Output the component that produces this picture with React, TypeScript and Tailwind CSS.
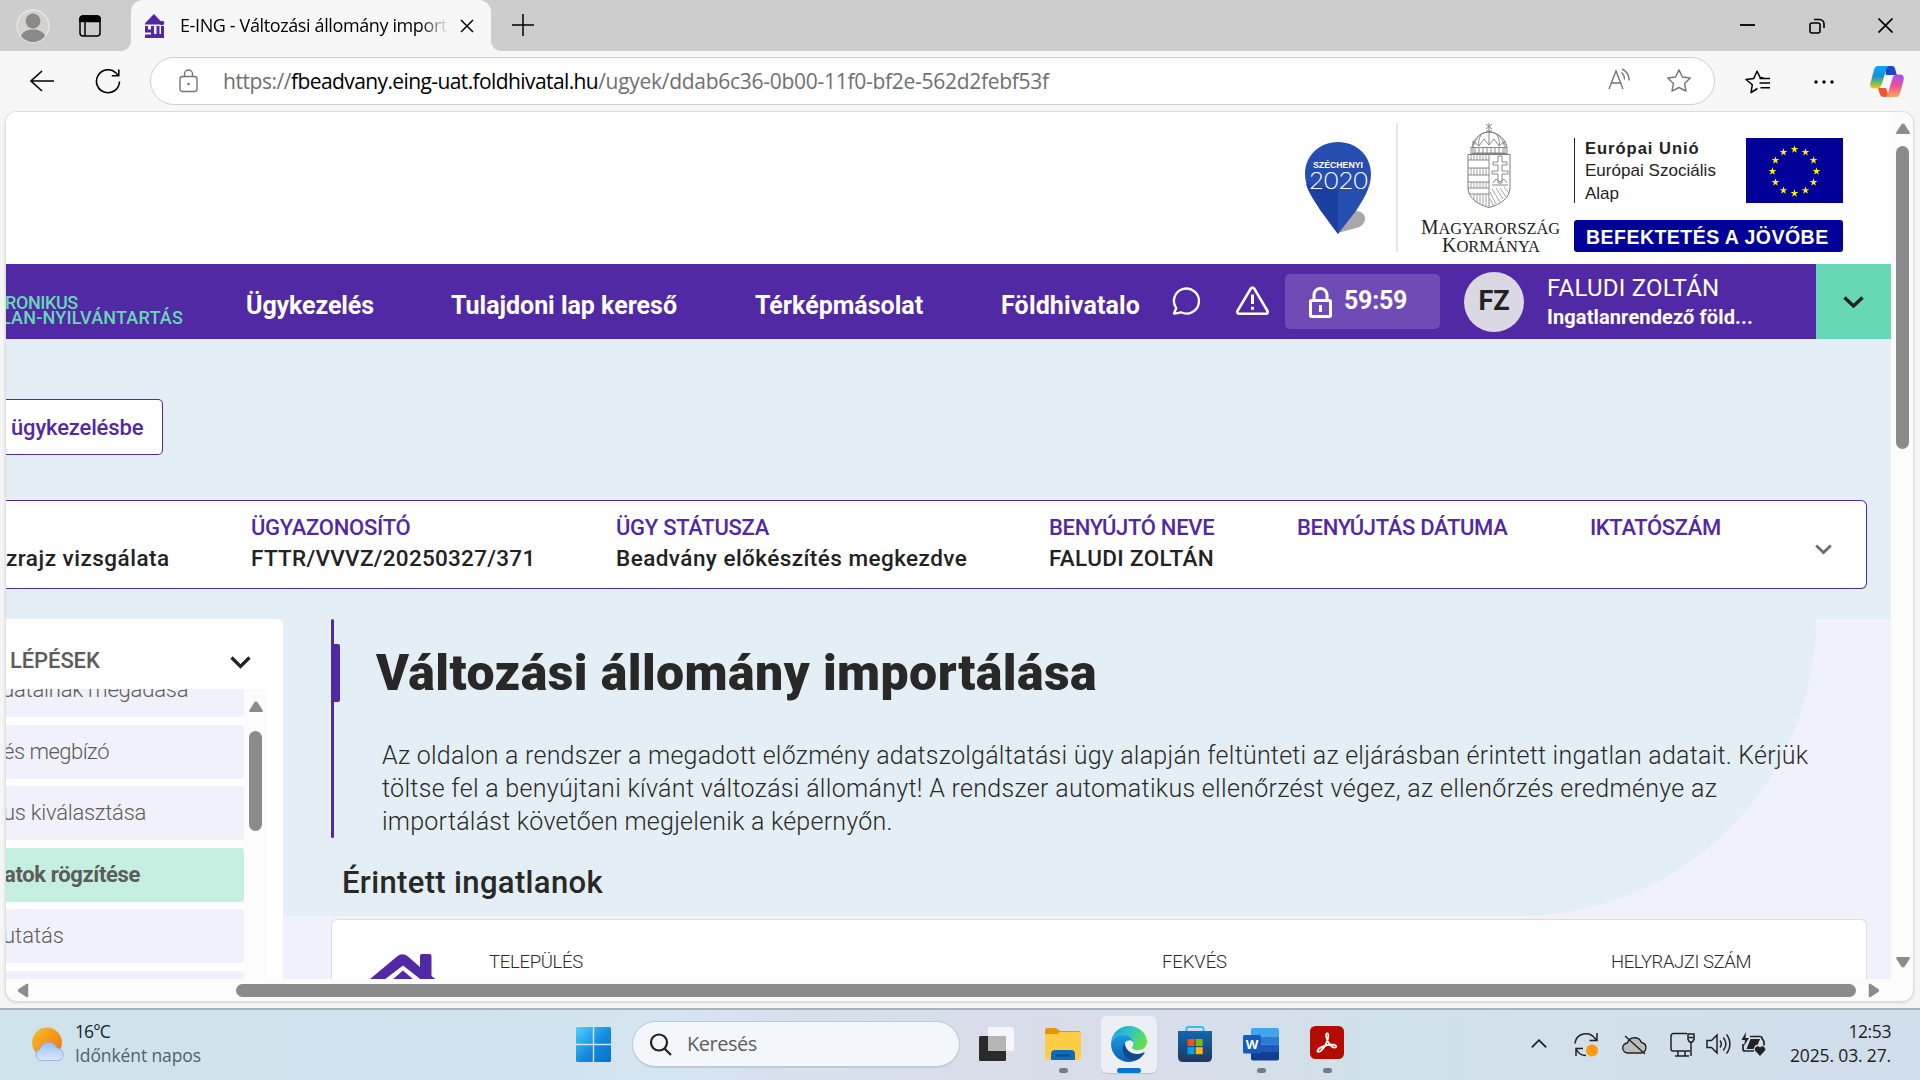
import type { ReactNode } from "react";

const STAR = "M12 2.6l2.9 6 6.6.9-4.8 4.6 1.2 6.5-5.9-3.1-5.9 3.1 1.2-6.5L2.5 9.5l6.6-.9z";

function AppHouse({ className }: { className: string }) {
  return (
    <svg viewBox="0 0 21 24" className={className} fill="#5229a5">
      <path d="M10 0L16.500 7v3.500H1V9.200z" />
      <circle cx="18" cy="9" r="2.300" />
      <path d="M1 12h3v3.500h3V12h3v8h2.500v-8h3v8H17v-8h3v12H1v-3.500h6V18.500H1z" />
    </svg>
  );
}

function TabStrip() {
  return (
    <div className="flex h-[51px] shrink-0 items-start bg-[#cdcdcd]">
      <div className="flex h-[51px] w-[119px] items-center">
        <svg viewBox="0 0 34 34" className="ml-4 h-[34px] w-[34px]">
          <circle cx="17" cy="17" r="16" fill="#d4d2ce" stroke="#e8e6e3" strokeWidth="1.4" />
          <circle cx="17" cy="12" r="7.4" fill="#8c8885" />
          <path d="M5 27c2-5 7-6.500 12-6.500s10 1.500 12 6.500c-3 4-7.500 6-12 6s-9-2-12-6z" fill="#8c8885" />
        </svg>
        <svg viewBox="0 0 22 22" className="ml-[29px] h-[22px] w-[22px]" fill="none" stroke="#000" strokeWidth="1.5">
          <rect x="1" y="1" width="20" height="20" rx="3" />
          <path d="M1 4a3 3 0 0 1 3-3h14a3 3 0 0 1 3 3v2.500H1z" fill="#000" />
          <path d="M6 6v15" />
        </svg>
      </div>
      <div className="flex h-[51px] w-[12px] items-end bg-[#f7f7f7]">
        <div className="h-[51px] w-[12px] rounded-br-[10px] bg-[#cdcdcd]" />
      </div>
      <div className="h-[51px] w-[360px] bg-[#cdcdcd]">
        <div className="flex h-[51px] items-center rounded-t-[12px] bg-[#f7f7f7] pl-[13px]">
          <AppHouse className="h-6 w-[21px]" />
          <span className="ml-[15px] w-[267px] overflow-hidden whitespace-nowrap bg-gradient-to-r from-black from-90% to-black/5 bg-clip-text pb-px font-['Open_Sans'] text-[18px] leading-[26px] tracking-[-0.38px] text-transparent">
            E-ING - Változási állomány import
          </span>
          <svg viewBox="0 0 14 14" className="ml-[13px] h-[14px] w-[14px]" stroke="#000" strokeWidth="1.500">
            <path d="M1 1l12 12M13 1L1 13" />
          </svg>
        </div>
      </div>
      <div className="h-[51px] w-[10px] bg-[#f7f7f7]">
        <div className="h-[51px] w-[10px] rounded-bl-[10px] bg-[#cdcdcd]" />
      </div>
      <svg viewBox="0 0 22 22" className="ml-[11px] mt-[14px] h-[22px] w-[22px]" stroke="#000" strokeWidth="1.500">
        <path d="M11 0v22M0 11h22" />
      </svg>
      <div className="ml-auto flex h-[51px] items-center pr-[27px]">
        <svg viewBox="0 0 15 15" className="h-[15px] w-[15px]" stroke="#000" strokeWidth="1.800">
          <path d="M0 7h15" />
        </svg>
        <svg viewBox="0 0 16 16" className="ml-[54px] h-[16px] w-[16px]" fill="none" stroke="#000" strokeWidth="1.600">
          <rect x="1" y="5" width="10" height="10" rx="2" />
          <path d="M5 1.500h5.500a4.500 4.500 0 0 1 4.500 4.500V10" />
        </svg>
        <svg viewBox="0 0 15 15" className="ml-[53px] h-[15px] w-[15px]" stroke="#000" strokeWidth="1.700">
          <path d="M.5.5l14 14M14.500.5l-14 14" />
        </svg>
      </div>
    </div>
  );
}

function Toolbar() {
  return (
    <div className="flex h-[60px] shrink-0 items-start bg-[#f7f7f7] pt-[6px]">
      <svg viewBox="0 0 24 22" className="ml-[30px] mt-[13px] h-[22px] w-6" fill="none" stroke="#000" strokeWidth="1.600">
        <path d="M24 11H1M12 1L1 11l11 10" />
      </svg>
      <svg viewBox="0 0 26 26" className="ml-[41px] mt-[11px] h-[26px] w-[26px]" fill="none" stroke="#000" strokeWidth="1.600">
        <path d="M24.500 13.500A11.500 11.500 0 1 1 21 5l2.500 2.500M23.800 1.500v6.300h-7" />
      </svg>
      <div className="ml-[29px] flex h-12 w-[1565px] items-center rounded-full border border-[#d0d0d0] bg-white">
        <svg viewBox="0 0 19 24" className="ml-[28px] h-6 w-[19px]" fill="none" stroke="#757575" strokeWidth="1.400">
          <rect x="1" y="7.500" width="17" height="15" rx="2.500" />
          <path d="M5.500 7.500V5a4 4 0 0 1 8 0v2.500" />
          <circle cx="9.500" cy="15" r="1.300" fill="#757575" stroke="none" />
        </svg>
        <div className="ml-[25px] flex whitespace-nowrap font-['Open_Sans'] text-[21px] leading-[30px] text-[#707070]">
          <span className="tracking-[-0.45px]">https://</span>
          <span className="tracking-[-0.6px] text-black">fbeadvany.eing-uat.foldhivatal.hu</span>
          <span className="tracking-[-0.280px]">/ugyek/ddab6c36-0b00-11f0-bf2e-562d2febf53f</span>
        </div>
        <svg viewBox="0 0 24 22" className="ml-auto mb-1 h-[22px] w-6" fill="none" stroke="#757575" strokeWidth="1.400">
          <path d="M1 21L8 3l7 18M3.500 15h9M13 4.500c2.500 1.500 3.500 4 3.500 7M14 1c4.500 2 7 6 7.300 11.500" />
        </svg>
        <svg viewBox="1 1 22 22" className="ml-[34px] mr-[22px] h-[26px] w-[26px]" fill="none" stroke="#757575" strokeWidth="1.200" strokeLinejoin="round">
          <path d={STAR} />
        </svg>
      </div>
      <svg viewBox="0 0 26 24" className="ml-[30px] mt-[13px] h-6 w-[26px]" fill="none" stroke="#000" strokeWidth="1.500" strokeLinejoin="round">
        <path d="M12.500 18.500L6 22.500l1.300-7.700L1 9.500l7.800-1L12 1.200l3.200 6.500h3M14.500 8.500H25M14.500 13H25M15.500 17.800H25" />
      </svg>
      <svg viewBox="0 0 20 4" className="ml-[43px] mt-[23px] h-1 w-5">
        <circle cx="2" cy="2" r="1.700" />
        <circle cx="10" cy="2" r="1.700" />
        <circle cx="18" cy="2" r="1.700" />
      </svg>
      <svg viewBox="0 0 34 31" className="ml-[36px] mt-[9px] h-[31px] w-[34px]">
        <defs>
          <linearGradient id="cpA" x1="0" y1="0" x2="0" y2="1">
            <stop offset="0" stopColor="#12a5ee" />
            <stop offset=".45" stopColor="#1a8fd8" />
            <stop offset=".75" stopColor="#6fbf5a" />
            <stop offset="1" stopColor="#ffc800" />
          </linearGradient>
          <linearGradient id="cpB" x1="0" y1="0" x2="0" y2="1">
            <stop offset="0" stopColor="#a94df0" />
            <stop offset=".5" stopColor="#ee5190" />
            <stop offset="1" stopColor="#ffa35c" />
          </linearGradient>
        </defs>
        <path d="M15 0h7c2 0 2.600 1.200 3.200 3l1.600 6h-6l-5 0z" fill="#1b45cf" />
        <path d="M19 31h-5c-2.500 0-3.500-1-4.200-3L8 22h8z" fill="#f0562f" />
        <path d="M8 0h12c-2.500 0-3.500 2-4.300 5l-3.900 13c-1 3-2 4.500-5 4.500H4C.7 22.500-.4 20 .4 17L4 4c.7-2.600 1.700-4 4-4z" fill="url(#cpA)" />
        <path d="M26 31H14c2.500 0 3.500-2 4.300-5l3.900-13c1-3 2-4.500 5-4.500H30c3.300 0 4.400 2.500 3.600 5.500L30 27c-.7 2.600-1.700 4-4 4z" fill="url(#cpB)" />
      </svg>
    </div>
  );
}

function SzechenyiPin() {
  return (
    <svg viewBox="0 0 66 92" className="mt-[30px] h-[92px] w-[66px]">
      <path d="M33 91l18-22c6 0 9 4 9 8s-4 8-9 9z" fill="#a8a8a8" />
      <path d="M33 0c19 0 33 14 33 32 0 14-8 26-15 37L33 92 16 69C8 56 0 46 0 32 0 14 14 0 33 0z" fill="#264db0" />
      <path d="M33 48v44L16 69C11 61 4 52 1 42z" fill="#1c3fa2" />
      <text x="8" y="26" textLength="50" lengthAdjust="spacingAndGlyphs" fontFamily="Liberation Sans" fontWeight="700" fontSize="8.500" fill="#fff">SZÉCHENYI</text>
      <text x="4" y="46.500" textLength="59" lengthAdjust="spacingAndGlyphs" fontFamily="Lato" fontWeight="300" fontSize="23" fill="#fff">2020</text>
    </svg>
  );
}

function GovernmentLogo() {
  return (
    <svg viewBox="0 0 140 132" className="mt-[10px] h-[132px] w-[140px]" fill="none" stroke="#7d7d7d" strokeWidth=".9">
      <path d="M65 2l6 5M71 2l-6 5M68 1v10M65 9h6" />
      <path d="M53 23c2-8 8-13 15-13s13 5 15 13M52 31V19l6 5 5-7 5 6 5-6 5 7 6-5v12zM68 11v12M60 13c-2 3-3 7-2 11M76 13c2 3 3 7 2 11" />
      <path d="M51 25c2-9 9-15 17-15s16 6 18 15" />
      <rect x="50" y="25.500" width="36" height="6" />
      <path d="M54 26v5M58 26v5M62 26v5M66 26v5M70 26v5M74 26v5M78 26v5M82 26v5" />
      <path d="M47 32.500h42v33c0 10-9 17-21 20-12-3-21-10-21-20z" strokeWidth="1" />
      <path d="M68 32v53M47 38h21M47 46h21M47 53h21M47 60h21M47 66h21M48 72h20" />
      <path d="M50 33v5M53 33v5M56 33v5M59 33v5M62 33v5M65 33v5M50 46v7M53 46v7M56 46v7M59 46v7M62 46v7M65 46v7M50 60v6M53 60v6M56 60v6M59 60v6M62 60v6M65 60v6M53 72v6M56 72v8M59 72v10M62 72v12M65 72v12" strokeWidth=".7" />
      <path d="M77 34h4v6h5v3h-5v6h6v3h-6v9h-4v-9h-6v-3h6v-6h-5v-3h5zM71 63h16M72 61l3-4 4 3 4-3 3 4" />
      <path d="M69 70l6 12M69 77l4 7M71 67l8 13M75 66l7 11M79 66l6 9M83 65l5 6" strokeWidth=".7" />
      <g fill="#222" stroke="none" fontFamily="Liberation Serif">
        <text x="0" y="111.500" textLength="139" lengthAdjust="spacingAndGlyphs" fontSize="20.500">
          M<tspan fontSize="17">AGYARORSZÁG</tspan>
        </text>
        <text x="21" y="129.700" textLength="98" lengthAdjust="spacingAndGlyphs" fontSize="20.500">
          K<tspan fontSize="17">ORMÁNYA</tspan>
        </text>
      </g>
    </svg>
  );
}

const euStars = Array.from({ length: 12 }, (_, i) => {
  const a = (i * Math.PI) / 6;
  return { x: 48.5 + 22 * Math.sin(a), y: 33 - 22 * Math.cos(a) };
});

function LogoBand() {
  return (
    <div className="flex h-[152px] shrink-0 bg-white pl-[1299px]">
      <SzechenyiPin />
      <div className="ml-[25px] mt-[11px] h-[129px] w-[2px] bg-[#e6e6e6]" />
      <div className="ml-[23px]">
        <GovernmentLogo />
      </div>
      <div className="ml-[13px] mt-[26px] w-[269px]">
        <div className="flex justify-between">
          <div className="h-[65px] border-l-[1.500px] border-[#222] pl-[10px] font-['Liberation_Sans'] text-[16.500px] leading-[22.750px] text-[#222]">
            <div className="-mt-px font-bold tracking-[1px]">Európai Unió</div>
            <div className="text-[17px] tracking-[0.030px]">Európai Szociális</div>
            <div className="text-[17px]">Alap</div>
          </div>
          <svg viewBox="0 0 97 65" className="h-[65px] w-[97px]">
            <rect width="97" height="65" fill="#000099" />
            {euStars.map((s, i) => (
              <g key={i} transform={`translate(${s.x} ${s.y}) scale(.34) translate(-12 -12)`}>
                <path d="M12 1l2.700 8.300h8.700l-7 5.100 2.600 8.300-7-5.100-7 5.100 2.600-8.300-7-5.100h8.700z" fill="#ffee00" />
              </g>
            ))}
          </svg>
        </div>
        <div className="mt-[17px] flex h-8 items-center rounded-[3px] bg-[#000099] pl-[12px] pt-[2px] font-['Liberation_Sans'] text-[19.500px] font-bold leading-8 tracking-[0.470px] whitespace-nowrap text-white">
          BEFEKTETÉS A JÖVŐBE
        </div>
      </div>
    </div>
  );
}

function PrimaryNav() {
  return (
    <div className="flex h-[75px] shrink-0 bg-[#5229a5] font-['Roboto'] text-white">
      <div className="mt-[31px] h-[34px] w-[240px] overflow-hidden whitespace-nowrap text-[18px] font-medium leading-[14.500px] text-[#67d7b5]">
        <div className="-ml-px pt-px tracking-[-0.400px]">RONIKUS</div>
        <div className="-ml-[5px] tracking-[0.200px]">LAN-NYILVÁNTARTÁS</div>
      </div>
      <div className="mt-[27px] flex h-[30px] text-[25px] font-bold leading-[30px] whitespace-nowrap">
        <span className="w-[205px] tracking-[-0.100px]">Ügykezelés</span>
        <span className="w-[304px] tracking-[-0.020px]">Tulajdoni lap kereső</span>
        <span className="w-[246px]">Térképmásolat</span>
        <span className="w-[171px] tracking-[0.150px]">Földhivatalo</span>
      </div>
      <svg viewBox="0 0 29 29" className="mt-[22px] h-[29px] w-[29px]" fill="none" stroke="#fff" strokeWidth="2.300" strokeLinejoin="round">
        <path d="M2 27.500l2.200-5.300A12.500 12.500 0 1 1 9 26.300c-2.300.9-4.600 1.300-7 1.200z" />
      </svg>
      <svg viewBox="0 0 33 29" className="ml-[35px] mt-[22px] h-[29px] w-[33px]" fill="none" stroke="#fff" strokeWidth="2.500" strokeLinejoin="round">
        <path d="M14.800 2.500a2 2 0 0 1 3.400 0L31.500 25a1.800 1.800 0 0 1-1.500 2.700H3A1.800 1.800 0 0 1 1.500 25z" />
        <path d="M16.500 8.500v9.500M16.500 20.800v3" strokeWidth="3" />
      </svg>
      <div className="ml-[16px] mt-[10px] flex h-[55px] w-[155px] rounded-[5px] bg-[#704bb5]">
        <svg viewBox="0 0 23 31" className="ml-6 mt-[13px] h-[31px] w-[23px]" fill="none" stroke="#fff" strokeWidth="3">
          <rect x="1.500" y="13.500" width="20" height="16" rx="1" />
          <path d="M5 13V8a6.500 6.500 0 0 1 13 0v5" />
          <path d="M11.500 18v7" />
        </svg>
        <span className="ml-[12px] mt-[12px] text-[25px] font-bold leading-[30px] tracking-[-0.280px]">59:59</span>
      </div>
      <div className="ml-6 mt-2 flex h-[60px] w-[60px] items-center justify-center rounded-full bg-[#dad8e3] pb-[2px] text-[27px] font-bold text-[#222]">
        FZ
      </div>
      <div className="ml-[23px] mt-[9px] w-[269px] whitespace-nowrap">
        <div className="text-[24px] leading-[30px] tracking-[0.230px]">FALUDI ZOLTÁN</div>
        <div className="text-[20px] font-bold leading-[29px] tracking-[0.120px]">Ingatlanrendező föld...</div>
      </div>
      <div className="flex h-[75px] flex-1 items-center justify-center bg-[#67d7b5]">
        <svg viewBox="0 0 21 12" className="h-3 w-[21px]" fill="none" stroke="#222" strokeWidth="3.400">
          <path d="M1.500 1.500l9 8.500 9-8.500" />
        </svg>
      </div>
    </div>
  );
}

const caseFields = [
  { w: "w-[365px]", label: "ÜGYAZONOSÍTÓ", lt: "tracking-[-0.270px]", value: "FTTR/VVVZ/20250327/371", vt: "tracking-[0.270px]" },
  { w: "w-[433px]", label: "ÜGY STÁTUSZA", lt: "tracking-[-0.280px]", value: "Beadvány előkészítés megkezdve", vt: "tracking-[0.450px]" },
  { w: "w-[248px]", label: "BENYÚJTÓ NEVE", lt: "tracking-[-0.280px]", value: "FALUDI ZOLTÁN", vt: "tracking-[0.380px]" },
  { w: "w-[293px]", label: "BENYÚJTÁS DÁTUMA", lt: "tracking-[-0.320px]", value: "", vt: "" },
  { w: "w-[225px]", label: "IKTATÓSZÁM", lt: "tracking-[-0.380px]", value: "", vt: "" },
];

function CasePanel() {
  return (
    <div className="mt-[45px] flex h-[89px] w-[1861px] shrink-0 overflow-hidden rounded-r-[6px] border border-l-0 border-[#5229a5] bg-white pt-[13px] font-['Roboto'] whitespace-nowrap">
      <div className="w-[245px] pt-[30px] text-[22.500px] font-medium leading-[28px] tracking-[0.500px] text-[#222]">zrajz vizsgálata</div>
      {caseFields.map((f) => (
        <div key={f.label} className={f.w}>
          <div className={"text-[22px] font-medium leading-[28px] text-[#5229a5] " + f.lt}>{f.label}</div>
          <div className={"mt-[2px] text-[22.500px] font-medium leading-[28px] text-[#222] " + f.vt}>{f.value}</div>
        </div>
      ))}
      <svg viewBox="0 0 17 11" className="mt-[30px] h-[11px] w-[17px]" fill="none" stroke="#6e6e6e" strokeWidth="2.800">
        <path d="M1.200 1.500l7.300 7 7.300-7" />
      </svg>
    </div>
  );
}

const steps = [
  { text: "datainak megadása", cls: "bg-[#f1f1fb] font-light tracking-[-0.200px] -indent-[4px]" },
  { text: "és megbízó", cls: "bg-[#f1f1fb] font-light tracking-[-0.500px] -indent-[3px]" },
  { text: "us kiválasztása", cls: "bg-[#f1f1fb] font-light tracking-[-0.260px] -indent-[3px]" },
  { text: "atok rögzítése", cls: "bg-[#c5efe1] font-bold tracking-[-0.350px] -indent-[2px]" },
  { text: "utatás", cls: "bg-[#f1f1fb] font-light -indent-[3px]" },
  { text: "", cls: "bg-[#f1f1fb]" },
];

function StepSidebar() {
  return (
    <div className="h-[360px] w-[276.500px] shrink-0 overflow-hidden rounded-tr-[6px] bg-white font-['Roboto'] text-[22px]">
      <div className="flex h-[70px] items-center justify-between pl-[4px] pr-[32px] pt-[14px]">
        <span className="font-medium leading-7 tracking-[-0.100px] text-[#5c5c5c]">LÉPÉSEK</span>
        <svg viewBox="0 0 21 13" className="mt-[3px] h-[13px] w-[21px]" fill="none" stroke="#222" strokeWidth="3.200">
          <path d="M1.500 1.500l9 9 9-9" />
        </svg>
      </div>
      <div className="flex h-[290px] overflow-hidden">
        <div className="-mt-[26px] flex w-[238px] flex-col gap-[7.500px]">
          {steps.map((s, i) => (
            <div key={i} className={"h-[54px] shrink-0 overflow-hidden rounded-r-[3px] pb-px leading-[53px] whitespace-nowrap text-[#5c5c5c] " + s.cls}>
              {s.text}
            </div>
          ))}
        </div>
        <div className="flex w-[23px] flex-col items-center bg-[#fcfcfc] pt-[12px]">
          <Arrow className="" />
          <div className="mt-[19px] h-[100px] w-[13px] rounded-full bg-[#8b8b8b]" />
        </div>
      </div>
    </div>
  );
}

function ImportContent() {
  return (
    <div className="relative h-[360px] flex-1 bg-[#f1f1fb] font-['Roboto']">
      <div className="absolute left-0 top-0 h-[297px] w-[1533px] rounded-br-[297px] bg-[#e3eff4]" />
      <div className="relative flex flex-col pl-[48.500px]">
        <div className="flex h-[219px] whitespace-nowrap">
          <div className="w-[3px] rounded-full bg-[#5229a5]" />
          <div className="mt-[25px] h-[58px] w-[6px] rounded-r-[2px] bg-[#5229a5]" />
          <div className="ml-[36px] mt-[24px]">
            <h1 className="text-[50px] font-black leading-[60px] tracking-[0.420px] text-[#282828]">Változási állomány importálása</h1>
            <p className="ml-[6px] mt-[36px] text-[25px] font-light leading-[33px] text-[#2a2a2a]">
              <span className="block tracking-[0.240px]">
                Az oldalon a rendszer a megadott előzmény adatszolgáltatási ügy alapján feltünteti az eljárásban érintett ingatlan adatait. Kérjük
              </span>
              <span className="block tracking-[0.310px]">
                töltse fel a benyújtani kívánt változási állományt! A rendszer automatikus ellenőrzést végez, az ellenőrzés eredménye az
              </span>
              <span className="block tracking-[0.240px]">importálást követően megjelenik a képernyőn.</span>
            </p>
          </div>
        </div>
        <h2 className="ml-[11px] mt-[25px] text-[31px] font-medium leading-10 tracking-[0.350px] text-[#282828]">Érintett ingatlanok</h2>
        <div className="mt-[16px] flex h-[60px] w-[1536px] overflow-hidden rounded-t-[6px] border border-b-0 border-[#dcdce4] bg-white text-[18.500px] font-light leading-6 text-[#2a2a2a]">
          <svg viewBox="0 0 66 26" className="ml-[38px] mt-[34px] h-[26px] w-[66px] shrink-0" fill="#5229a5">
            <path d="M0 25L27 2.500q5.500-4.500 11 0L50 13V2q0-2 2-2h7.500q2 0 2 2v20l4 3v1H51.500L33 11.500 14 26H0z" />
            <path d="M22 26l11-9.500L44 26z" />
          </svg>
          <span className="ml-[53px] mt-[30px] w-[673px] tracking-[-0.300px]">TELEPÜLÉS</span>
          <span className="mt-[30px] w-[449px] tracking-[-0.090px]">FEKVÉS</span>
          <span className="mt-[30px] tracking-[-0.430px]">HELYRAJZI SZÁM</span>
        </div>
      </div>
    </div>
  );
}

function Arrow({ className }: { className: string }) {
  return (
    <svg viewBox="0 0 14 11" className={"h-[11px] w-[14px] " + className} fill="#8b8b8b">
      <path d="M5.500 1.200a1.800 1.800 0 0 1 3 0l5.200 8c.5 1-.1 1.800-1 1.800H1.300C.4 11-.2 10.200.3 9.200z" />
    </svg>
  );
}

function Viewport() {
  return (
    <div className="ml-[5px] flex h-[891px] w-[1909px] shrink-0 flex-col overflow-hidden rounded-[12px] border border-[#dedede] bg-[#fcfcfc] shadow-sm">
      <div className="flex h-[867px]">
        <div className="flex h-[867px] w-[1885px] flex-col overflow-hidden bg-[#e3eff4]">
          <LogoBand />
          <PrimaryNav />
          <div className="mt-[60px] flex h-14 w-[157px] shrink-0 items-center rounded-r-[5px] border border-l-0 border-[#5229a5] bg-white pl-[5px] font-['Roboto'] text-[22px] font-medium tracking-[-0.150px] whitespace-nowrap text-[#5229a5]">
            ügykezelésbe
          </div>
          <CasePanel />
          <div className="mt-[30px] flex">
            <StepSidebar />
            <ImportContent />
          </div>
        </div>
        <div className="flex w-[22px] flex-col items-center pl-px pt-[11px]">
          <Arrow className="" />
          <div className="mt-[12px] h-[303px] w-[13px] rounded-full bg-[#8b8b8b]" />
          <Arrow className="mb-[11px] mt-auto rotate-180" />
        </div>
      </div>
      <div className="flex h-[22px] w-[1885px] items-center">
        <Arrow className="ml-[10px] -rotate-90" />
        <div className="ml-[206px] h-[13px] w-[1620px] rounded-full bg-[#8b8b8b]" />
        <Arrow className="ml-[11px] rotate-90" />
      </div>
    </div>
  );
}

function TaskItem({ children, running, active }: { children: ReactNode; running?: boolean; active?: boolean }) {
  return (
    <div className={"flex h-[57px] w-[56px] shrink-0 flex-col items-center rounded-[6px] pt-[10px] " + (active ? "bg-[#ecf0f5] shadow-[0_1px_1px_#b9c0ca]" : "")}>
      <div className="h-[36px] w-[36px]">{children}</div>
      {active && <div className="mt-[6px] h-[5px] w-6 rounded-full bg-[#0078d4]" />}
      {running && !active && <div className="mt-[6px] h-[5px] w-[9px] rounded-full bg-[#747b84]" />}
    </div>
  );
}

function Taskbar() {
  return (
    <div className="flex h-[70px] shrink-0 items-start bg-[linear-gradient(90deg,#cfe3ed_0%,#d0e3ee_26%,#d5e4f1_35%,#d9dce9_52%,#d6dee9_64%,#cfe1ea_72%,#d2e0ec_80%,#cfdeea_100%)] font-['Open_Sans']">
      <svg viewBox="0 0 34 34" className="ml-[32px] mt-[17px] h-[34px] w-[34px]">
        <defs>
          <linearGradient id="sun" x1="0" y1="0" x2="1" y2="1">
            <stop offset="0" stopColor="#f2c230" />
            <stop offset="1" stopColor="#f66c0a" />
          </linearGradient>
          <linearGradient id="cloud" x1="0" y1="0" x2="0" y2="1">
            <stop offset="0" stopColor="#9dbdf2" />
            <stop offset="1" stopColor="#dce8fc" />
          </linearGradient>
        </defs>
        <circle cx="15" cy="15.500" r="15" fill="url(#sun)" />
        <path d="M9 33.500a6 6 0 0 1-1-11.500 9 9 0 0 1 17-1 6.500 6.500 0 0 1 2 12.500z" fill="url(#cloud)" stroke="#86a9e6" strokeWidth=".8" />
      </svg>
      <div className="ml-[9px] mt-[10px] w-[501px] text-[17.500px] leading-[23.500px] whitespace-nowrap">
        <div className="tracking-[-0.900px] text-[#1c1f22]">16°C</div>
        <div className="tracking-[-0.100px] text-[#55606a]">Időnként napos</div>
      </div>
      <svg viewBox="0 0 35 35" className="mt-[17px] h-[35px] w-[35px]">
        <defs>
          <linearGradient id="win" x1="0" y1="0" x2="1" y2="1">
            <stop offset="0" stopColor="#4fd2ff" />
            <stop offset=".55" stopColor="#1389dd" />
            <stop offset="1" stopColor="#0074cf" />
          </linearGradient>
        </defs>
        <path d="M1 0h15.800v16.800H0V1zM18.200 0H34l1 1v15.800H18.200zM0 18.200h16.800V35H1l-1-1zM18.200 18.200H35V34l-1 1H18.200z" fill="url(#win)" />
      </svg>
      <div className="ml-[21px] mt-[11px] flex h-[47px] w-[328px] items-center rounded-full border border-b-2 border-[#bccbd9] bg-[#f3f7fb]">
        <svg viewBox="0 0 23 23" className="ml-[16px] h-[23px] w-[23px]" fill="none" stroke="#222" strokeWidth="2.200">
          <circle cx="10" cy="9.500" r="8" />
          <path d="M15.500 15.500L22 22" />
        </svg>
        <span className="ml-[15px] text-[20px] leading-7 tracking-[-0.500px] text-[#5b5f63]">Keresés</span>
      </div>
      <div className="ml-[9px] mt-[6px] flex gap-[10px]">
        <TaskItem>
          <svg viewBox="0 0 36 36" className="h-9 w-9">
            <rect x="0" y="10" width="27" height="25" rx="1.500" fill="#2a2a2a" />
            <rect x="9" y="1" width="26" height="24" rx="1.500" fill="#f6f6f8" />
            <path d="M9 10h18v15H9z" fill="#b5b5b5" />
          </svg>
        </TaskItem>
        <TaskItem running>
          <svg viewBox="0 0 36 36" className="h-9 w-9">
            <path d="M0 4q0-2 2-2h9l4 3h19q2 0 2 2v4H0z" fill="#dc9a08" />
            <path d="M0 8h12l3-2h19q2 0 2 2v24q0 2-2 2H2q-2 0-2-2z" fill="#ffcc45" />
            <path d="M6 34v-6q0-4 4-4h16q4 0 4 4v6z" fill="#0f6cbd" />
            <path d="M11 29.500h14" stroke="#0b4b85" strokeWidth="2" />
          </svg>
        </TaskItem>
        <TaskItem active>
          <svg viewBox="0 0 36 36" className="h-9 w-9">
            <defs>
              <linearGradient id="edA" x1="0" y1="0" x2="1" y2=".5">
                <stop offset="0" stopColor="#1f9ede" />
                <stop offset=".5" stopColor="#2fc2c8" />
                <stop offset="1" stopColor="#62e04e" />
              </linearGradient>
              <linearGradient id="edB" x1="0" y1="0" x2="0" y2="1">
                <stop offset="0" stopColor="#1b9de2" />
                <stop offset="1" stopColor="#0b5cb0" />
              </linearGradient>
            </defs>
            <path d="M18 0c10 0 18 7.500 18 15.500 0 5.500-4.200 8.700-9 8.700-4 0-6.200-1.500-6.200-2.500 0-.8 1.600-1.400 1.600-4.300C22.400 12.500 17 9.500 12 9.500c-5 0-9.500 2.500-12 7C.7 7 8.500 0 18 0z" fill="url(#edA)" />
            <path d="M0 17c2-5 7-8 12-8 5.500 0 10.400 3.200 10.400 8.400 0-2.600-3.600-4.400-6.600-2.400-3.300 2.200-4.500 7-2.800 11.500C15 32 20.500 34.500 25 34.300 22.800 35.500 20.500 36 18 36 8 36 0 28 0 18z" fill="url(#edB)" />
            <path d="M14 16.500c-3.500 4.500-3 11.500 1.500 15.300 4 3.300 9 3.200 11 2 3-1.600 5.500-4 7-6.500.5-.9-.2-1.300-1-.8-4.500 2.300-10.500 2-14.500-1.300-3-2.500-4.300-5.600-4-8.700z" fill="#114a8b" />
          </svg>
        </TaskItem>
        <TaskItem>
          <svg viewBox="0 0 36 36" className="h-9 w-9">
            <defs>
              <linearGradient id="store" x1="0" y1="0" x2="0" y2="1">
                <stop offset="0" stopColor="#0f69ae" />
                <stop offset="1" stopColor="#22365f" />
              </linearGradient>
            </defs>
            <path d="M9.500 7V3q0-2 2-2h13q2 0 2 2v4" fill="none" stroke="#2fc1f5" strokeWidth="2" />
            <path d="M1 5h34v26q0 5-5 5H6q-5 0-5-5z" fill="url(#store)" />
            <path d="M10.500 13h7v7h-7z" fill="#f25022" />
            <path d="M18.700 13h7v7h-7z" fill="#7fba00" />
            <path d="M10.500 21.200h7v7h-7z" fill="#00a4ef" />
            <path d="M18.700 21.200h7v7h-7z" fill="#ffb900" />
          </svg>
        </TaskItem>
        <TaskItem running>
          <svg viewBox="0 0 36 36" className="h-9 w-9">
            <path d="M8 4q0-2 2-2h24q2 0 2 2v6.500H8z" fill="#41a5ee" />
            <path d="M8 10.500h28v8H8z" fill="#2b7cd3" />
            <path d="M8 18.500h28v7.500H8z" fill="#185abd" />
            <path d="M8 26h28v6.500q0 2-2 2H10q-2 0-2-2z" fill="#103f91" />
            <rect x="0" y="9" width="18" height="18.500" rx="1.500" fill="#185abd" />
            <text x="9" y="23" textAnchor="middle" fontFamily="Open Sans" fontWeight="700" fontSize="13" fill="#fff">W</text>
          </svg>
        </TaskItem>
        <TaskItem running>
          <svg viewBox="0 0 36 36" className="h-9 w-9">
            <rect x="1" y="0" width="34" height="33" rx="5.500" fill="#b30b00" />
            <path d="M8.500 24.500c1-3 8-5.500 14-5.800 5-.2 5.800 2.200 3.800 2.800-3.300 1-8.500-5.500-9.200-11.500-.4-3.500 2.400-3.600 2.300-.3-.1 4.500-4 12-7.200 15-2 1.800-4.200 1.500-3.700-.2z" fill="none" stroke="#fff" strokeWidth="1.700" />
          </svg>
        </TaskItem>
      </div>
      <div className="ml-auto flex items-start pr-[29px]">
        <svg viewBox="0 0 16 9" className="mt-[29px] h-[9px] w-4" fill="none" stroke="#222" strokeWidth="1.800">
          <path d="M.8 8.300L8 1.200l7.200 7.100" />
        </svg>
        <svg viewBox="0 0 25 25" className="ml-[27px] mt-[22px] h-[25px] w-[25px]" fill="none" stroke="#222" strokeWidth="1.500">
          <path d="M1 11.500A11 11 0 0 1 21 6.500l2 2M23 1v7.500h-7.500M12 23.500a10 10 0 0 1-9-5l-1-1.500M2 24v-7.500h7" />
          <circle cx="18" cy="18.500" r="6" fill="#ff9a0a" stroke="none" />
        </svg>
        <svg viewBox="0 0 25 20" className="ml-[23px] mt-[25px] h-5 w-[25px]" stroke="#222" strokeWidth="1.400">
          <path d="M6 18a5 5 0 0 1-.6-10A7.500 7.500 0 0 1 19.500 7.500 5.300 5.300 0 0 1 19 18z" fill="#bdbdbd" />
          <path d="M3 1l20 18" />
        </svg>
        <svg viewBox="0 0 25 25" className="ml-[23px] mt-[22px] h-[25px] w-[25px]" fill="none" stroke="#222" strokeWidth="1.500">
          <path d="M17 1.500H3.500a2.500 2.500 0 0 0-2.500 2.500v13a2 2 0 0 0 2 2h17M8 19v5M15 19v5M5 24h14" />
          <path d="M18 2h6v5.500l-1.500 2.500h-3L18 7.500zM21 10v14" />
          <path d="M18.500 5.500h5" />
        </svg>
        <svg viewBox="0 0 25 22" className="ml-[11px] mt-[23px] h-[22px] w-[25px]" fill="none" stroke="#222" strokeWidth="1.500">
          <path d="M1 7.500h4.500L11 2v18l-5.500-5.500H1zM14 7.500c1.500 2 1.500 5 0 7M17.300 4.500c3.200 4 3.200 9 0 13M20.500 1.500c4.500 5.500 4.500 13.500 0 19" />
        </svg>
        <svg viewBox="0 0 25 24" className="ml-[10px] mt-[22px] h-6 w-[25px]" fill="none" stroke="#222" strokeWidth="1.700">
          <path d="M9 4.500h10a2 2 0 0 1 2 2l2 3v4M2 12v5a2 2 0 0 0 2 2h9" />
          <path d="M5 0L.5 8H4l-1 6 5-8H4.500z" fill="#222" stroke="none" />
          <path d="M9.500 7H19l-2.500 6h-2l-2 4H5.500z" fill="#222" stroke="none" />
          <path d="M19 24l-5-5.500c-1.500-2.500 2.500-6 5-3 2.500-3 6.500.5 5 3z" fill="#222" stroke="none" />
        </svg>
        <div className="mt-[10px] w-[125px] text-right text-[17.500px] leading-[23.500px] whitespace-nowrap text-[#1c1f22]">
          <div className="tracking-[-0.400px]">12:53</div>
          <div className="tracking-[-0.150px]">2025. 03. 27.</div>
        </div>
      </div>
    </div>
  );
}

export default function App() {
  return (
    <div className="flex h-[1080px] w-[1920px] flex-col overflow-hidden bg-[#f5f5f5]">
      <TabStrip />
      <Toolbar />
      <Viewport />
      <div className="mt-[6px] h-[2px] shrink-0 bg-[#a7b4bf]" />
      <Taskbar />
    </div>
  );
}
